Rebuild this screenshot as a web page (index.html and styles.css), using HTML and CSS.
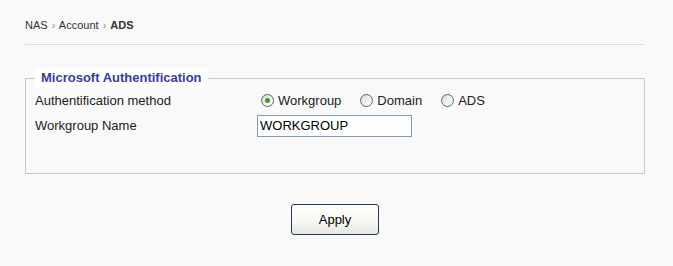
FILE: index.html
```html
<!DOCTYPE html>
<html lang="en">
<head>
    <meta charset="UTF-8">
    <title>ADS</title>
    <link rel="stylesheet" href="styles.css">
</head>
<body>
    <div class="page">
        <div class="breadcrumb">
            NAS <span class="sep">&rsaquo;</span> Account <span class="sep">&rsaquo;</span> <b>ADS</b>
        </div>

        <fieldset class="box">
            <legend>Microsoft Authentification</legend>
            <div class="row">
                <div class="label">Authentification method</div>
                <div class="radios">
                    <span class="opt"><span class="radio checked"></span>Workgroup</span>
                    <span class="opt"><span class="radio"></span>Domain</span>
                    <span class="opt"><span class="radio"></span>ADS</span>
                </div>
            </div>
            <div class="row tall">
                <div class="label">Workgroup Name</div>
                <div><input type="text" class="field" value="WORKGROUP"></div>
            </div>
        </fieldset>

        <div class="actions">
            <button class="btn">Apply</button>
        </div>
    </div>
</body>
</html>
```

FILE: styles.css
```css
* {
    box-sizing: border-box;
}

body {
    margin: 0;
    background: #f9f9f9;
    font-family: 'Liberation Sans', Arial, sans-serif;
    color: #222;
}

.page {
    width: 620px;
    margin-left: 25px;
}

.breadcrumb {
    font-size: 11px;
    line-height: 13px;
    word-spacing: 1px;
    color: #333;
    padding: 19px 0 12px;
    border-bottom: 1px solid #dcdcdc;
}

.breadcrumb .sep {
    color: #888;
}

.box {
    margin: 23px 0 0;
    padding: 0 9px 33px;
    border: 1px solid #c8c8c8;
    min-width: 0;
}

.box legend {
    padding: 0 6px;
    font-size: 13px;
    font-weight: bold;
    line-height: 20px;
    color: #3a3aa8;
    background: #fff;
}

.row {
    display: grid;
    grid-template-columns: 222px 1fr;
    align-items: center;
    height: 24px;
    font-size: 13px;
}

.row.tall {
    height: 27px;
    margin-bottom: 1px;
}

.radios {
    display: flex;
    align-items: center;
    padding-left: 4px;
}

.opt {
    display: flex;
    align-items: center;
    margin-right: 19px;
}

.radio {
    width: 13px;
    height: 13px;
    margin-right: 4px;
    border: 1px solid #4a6a8e;
    border-radius: 50%;
    background: linear-gradient(135deg, #d8d8d2 0%, #f4f4f0 60%, #fff 100%);
    display: flex;
    align-items: center;
    justify-content: center;
}

.radio.checked::after {
    content: "";
    width: 5px;
    height: 5px;
    border-radius: 50%;
    background: #2aa52a;
}

.field {
    width: 155px;
    height: 22px;
    border: 1px solid #7f9db9;
    background: #fff;
    padding: 0 2px;
    font-family: inherit;
    font-size: 13px;
    color: #000;
}

.actions {
    display: flex;
    justify-content: center;
    padding-top: 30px;
}

.btn {
    width: 88px;
    height: 31px;
    border: 1px solid #1d3a5a;
    border-radius: 3px;
    background: linear-gradient(#ffffff 0%, #f6f6f2 60%, #e6e6df 100%);
    font-family: inherit;
    font-size: 13px;
    color: #000;
}
```
